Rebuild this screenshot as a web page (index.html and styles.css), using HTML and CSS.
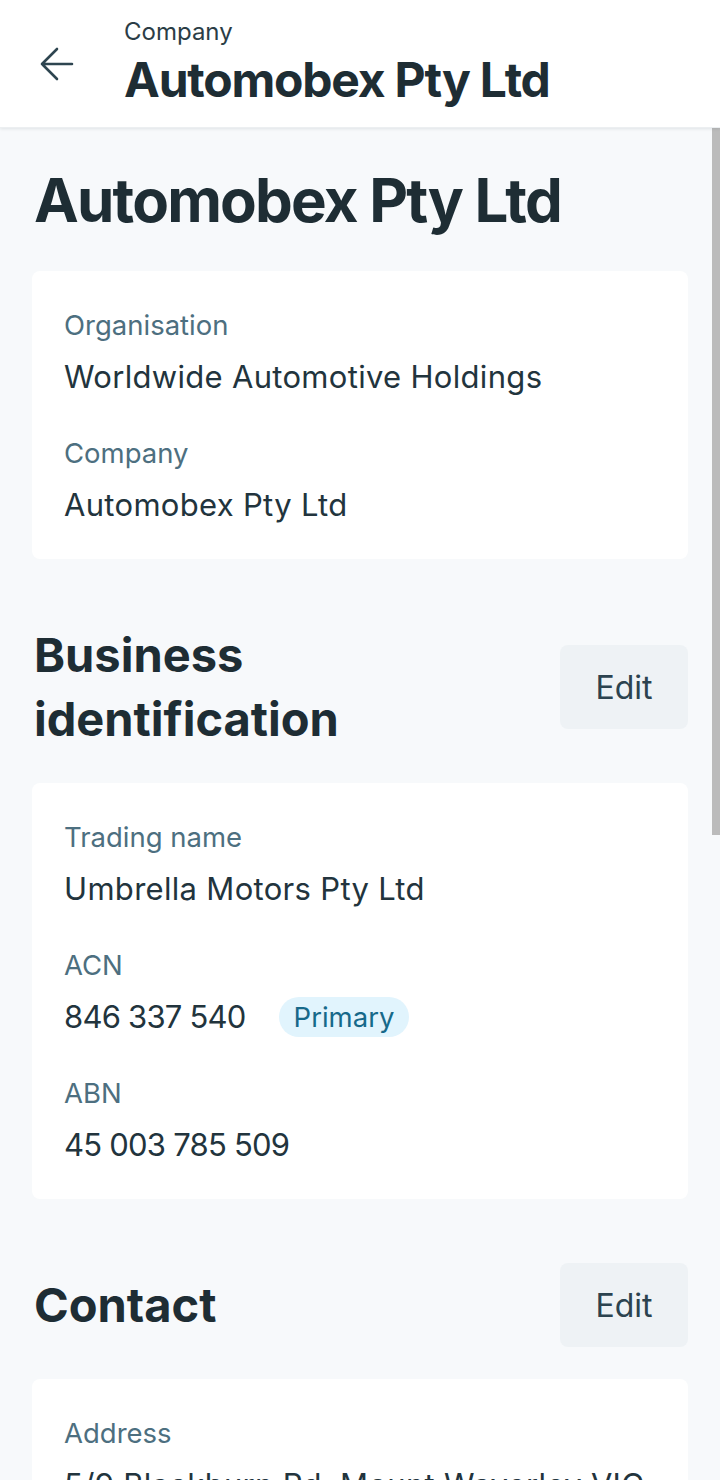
FILE: index.html
```html
<!DOCTYPE html>
<html lang="en">
<head>
<meta charset="utf-8">
<title>Automobex Pty Ltd</title>
<link rel="stylesheet" href="styles.css">
</head>
<body>
<div class="app">
  <header class="topbar">
    <button class="back" aria-label="Back">
      <svg width="36" height="36" viewBox="0 0 36 36" fill="none" stroke="currentColor" stroke-width="2.6" stroke-linecap="round" stroke-linejoin="round">
        <path d="M33 18H3M18 3L3 18l15 15"/>
      </svg>
    </button>
    <div class="topbar-titles">
      <div class="overline">Company</div>
      <div class="topbar-title">Automobex Pty Ltd</div>
    </div>
  </header>
  <main class="content">
    <h1 class="page-title">Automobex Pty Ltd</h1>

    <section class="card">
      <div class="field">
        <div class="label">Organisation</div>
        <div class="value">Worldwide Automotive Holdings</div>
      </div>
      <div class="field">
        <div class="label">Company</div>
        <div class="value">Automobex Pty Ltd</div>
      </div>
    </section>

    <div class="section-head">
      <h2 class="section-title">Business identification</h2>
      <button class="edit">Edit</button>
    </div>
    <section class="card">
      <div class="field">
        <div class="label">Trading name</div>
        <div class="value">Umbrella Motors Pty Ltd</div>
      </div>
      <div class="field">
        <div class="label">ACN</div>
        <div class="value value-row"><span class="num">846 337 540</span><span class="badge">Primary</span></div>
      </div>
      <div class="field">
        <div class="label">ABN</div>
        <div class="value"><span class="num">45 003 785 509</span></div>
      </div>
    </section>

    <div class="section-head">
      <h2 class="section-title">Contact</h2>
      <button class="edit">Edit</button>
    </div>
    <section class="card">
      <div class="field">
        <div class="label">Address</div>
        <div class="value">5/9 Blackburn Rd, Mount Waverley VIC</div>
      </div>
    </section>
  </main>
  <div class="scroll-thumb"></div>
</div>
</body>
</html>
```

FILE: styles.css
```css
* { box-sizing: border-box; }
html, body {
  margin: 0;
  padding: 0;
  width: 720px;
  height: 1480px;
  overflow: hidden;
}
body {
  font-family: Inter, "Noto Sans", "Liberation Sans", sans-serif;
  color: #1f2e36;
  background: #f7f9fb;
}
.app {
  position: relative;
  display: flex;
  flex-direction: column;
  height: 1480px;
  overflow: hidden;
}
.topbar {
  height: 128px;
  flex: none;
  background: #ffffff;
  display: flex;
  align-items: flex-start;
  box-shadow: 0 1px 3px rgba(20, 40, 50, 0.10);
  border-bottom: 1px solid #eceff1;
  position: relative;
  z-index: 1;
}
.back {
  margin: 46px 0 0 39px;
  padding: 0;
  border: 0;
  background: none;
  color: #2e4550;
  width: 36px;
  height: 36px;
  display: flex;
}
.topbar-titles {
  margin-left: 49px;
  padding-top: 18px;
}
.overline {
  font-size: 24px;
  line-height: 28px;
  color: #2b3d46;
}
.topbar-title {
  margin-top: 6px;
  font-size: 48px;
  line-height: 56px;
  font-weight: 700;
  letter-spacing: -0.025em;
  color: #1e2d34;
}
.content {
  flex: 1;
  min-height: 0;
  padding: 36px 32px 0;
  background: #f7f9fb;
}
.page-title {
  margin: 0 0 35px;
  padding-left: 2px;
  font-size: 60px;
  line-height: 72px;
  font-weight: 700;
  letter-spacing: -0.03em;
  color: #1e2d34;
}
.card {
  background: #ffffff;
  border-radius: 8px;
  padding: 32px;
  display: flex;
  flex-direction: column;
  gap: 32px;
}
.field {
  display: flex;
  flex-direction: column;
  gap: 8px;
}
.label {
  font-size: 27.5px;
  line-height: 44px;
  color: #4d6f80;
}
.value {
  font-size: 31px;
  line-height: 44px;
  letter-spacing: 0.01em;
  color: #22343d;
}
.num {
  letter-spacing: -0.025em;
}
.value-row {
  display: flex;
  align-items: center;
  gap: 33px;
}
.badge {
  font-size: 27.5px;
  line-height: 40px;
  height: 40px;
  padding: 0 15px;
  border-radius: 20px;
  background: #e1f4fd;
  color: #16698a;
  letter-spacing: 0;
}
.section-head {
  margin: 64px 0 32px;
  display: flex;
  align-items: center;
  gap: 24px;
}
.section-title {
  flex: 1;
  margin: 0;
  padding-left: 2px;
  font-size: 47px;
  line-height: 64px;
  font-weight: 700;
  letter-spacing: 0;
  color: #1e2d34;
}
.edit {
  flex: none;
  width: 128px;
  height: 84px;
  border: 0;
  border-radius: 8px;
  background: #eef2f5;
  font-family: inherit;
  font-size: 32px;
  color: #2c434f;
  padding: 0;
}
.scroll-thumb {
  position: absolute;
  right: 0;
  top: 128px;
  width: 8px;
  height: 707px;
  background: #bbbbbb;
}
```
